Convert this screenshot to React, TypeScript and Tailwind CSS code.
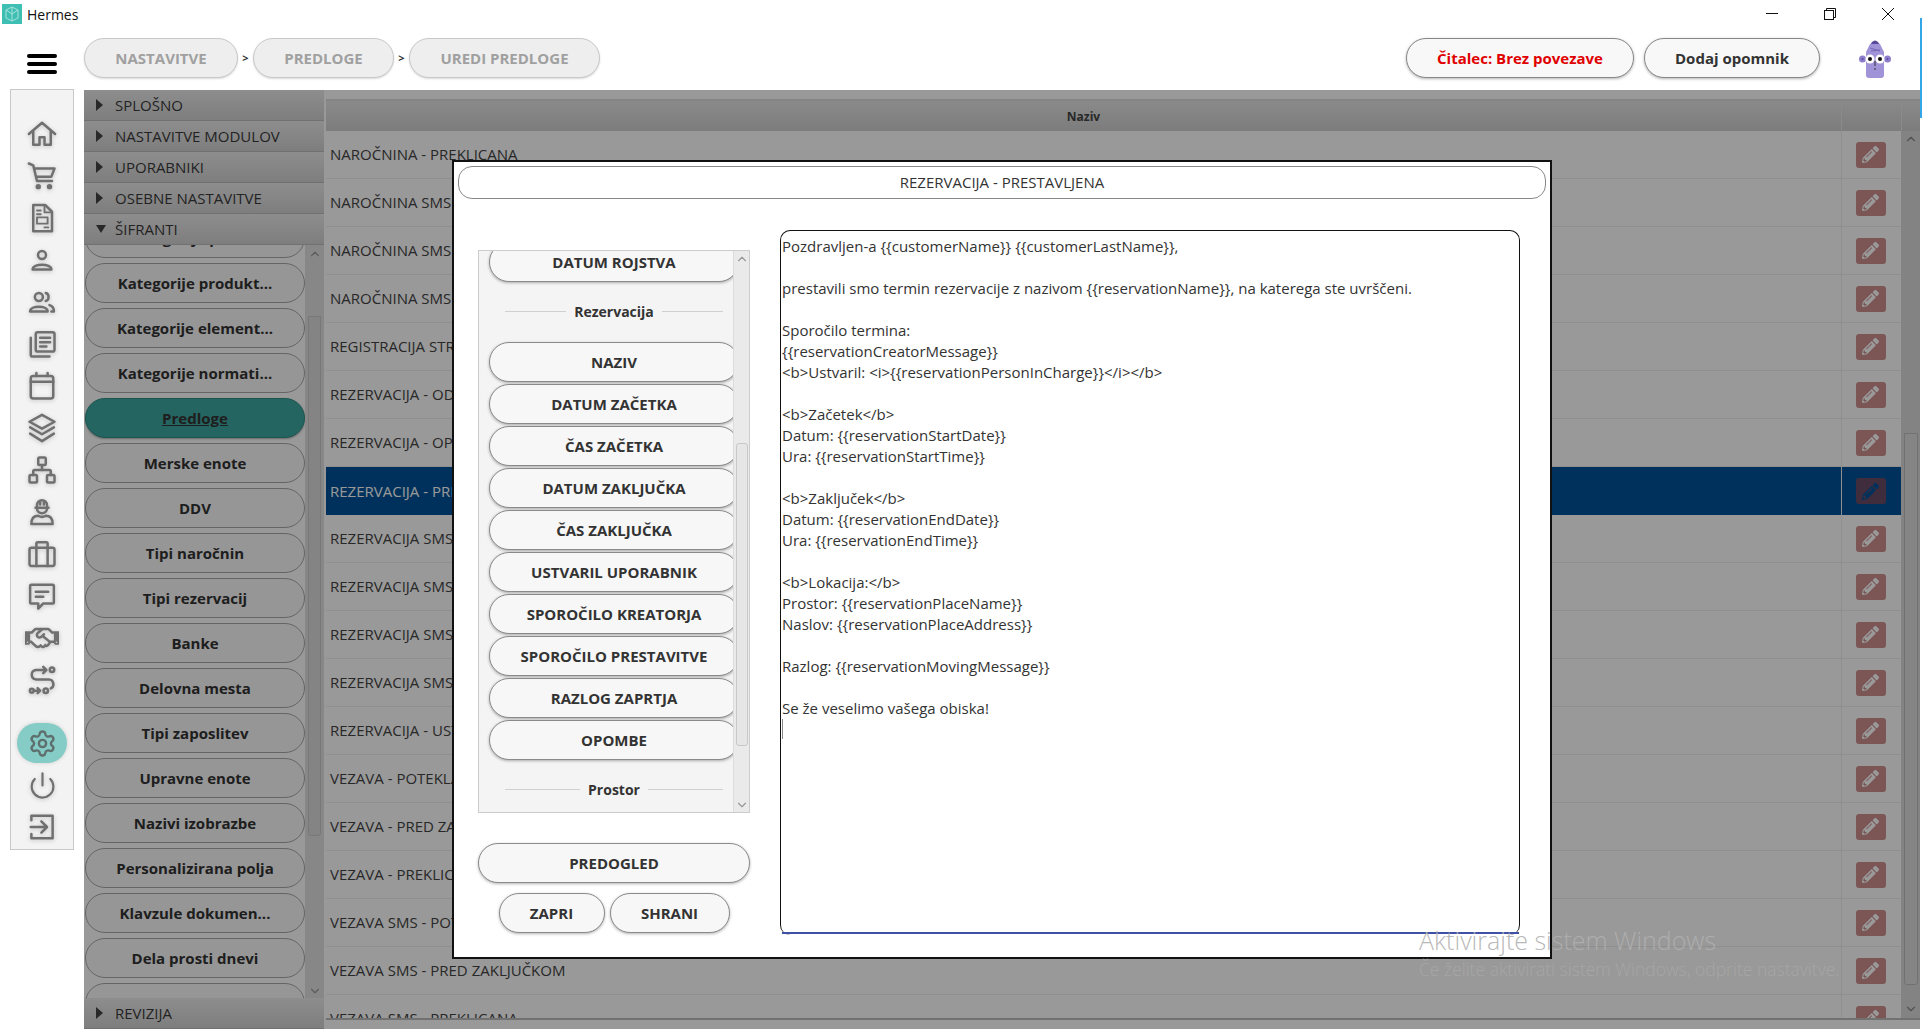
import { ReactNode } from "react";
import { ChevronDown, ChevronUp, Network, Power, Settings } from "lucide-react";
import { FaPencilAlt, FaRegHandshake } from "react-icons/fa";

const settingsButtons = [
  "Kategorije prost...",
  "Kategorije produkt...",
  "Kategorije element...",
  "Kategorije normati...",
  "Predloge",
  "Merske enote",
  "DDV",
  "Tipi naročnin",
  "Tipi rezervacij",
  "Banke",
  "Delovna mesta",
  "Tipi zaposlitev",
  "Upravne enote",
  "Nazivi izobrazbe",
  "Personalizirana polja",
  "Klavzule dokumen...",
  "Dela prosti dnevi",
  "",
];

const tableRows = [
  "NAROČNINA - PREKLICANA",
  "NAROČNINA SMS - POTEKLA",
  "NAROČNINA SMS - PRED ZAKLJUČKOM",
  "NAROČNINA SMS - PREKLICANA",
  "REGISTRACIJA STRANKE",
  "REZERVACIJA - ODPOVEDANA",
  "REZERVACIJA - OPOMNIK",
  "REZERVACIJA - PRESTAVLJENA",
  "REZERVACIJA SMS - ODPOVEDANA",
  "REZERVACIJA SMS - OPOMNIK",
  "REZERVACIJA SMS - PRESTAVLJENA",
  "REZERVACIJA SMS - USTVARJENA",
  "REZERVACIJA - USTVARJENA",
  "VEZAVA - POTEKLA",
  "VEZAVA - PRED ZAKLJUČKOM",
  "VEZAVA - PREKLICANA",
  "VEZAVA SMS - POTEKLA",
  "VEZAVA SMS - PRED ZAKLJUČKOM",
  "VEZAVA SMS - PREKLICANA",
];

const reservationFields = [
  "NAZIV",
  "DATUM ZAČETKA",
  "ČAS ZAČETKA",
  "DATUM ZAKLJUČKA",
  "ČAS ZAKLJUČKA",
  "USTVARIL UPORABNIK",
  "SPOROČILO KREATORJA",
  "SPOROČILO PRESTAVITVE",
  "RAZLOG ZAPRTJA",
  "OPOMBE",
];

const templateBody = `Pozdravljen-a {{customerName}} {{customerLastName}},

prestavili smo termin rezervacije z nazivom {{reservationName}}, na katerega ste uvrščeni.

Sporočilo termina:
{{reservationCreatorMessage}}
<b>Ustvaril: <i>{{reservationPersonInCharge}}</i></b>

<b>Začetek</b>
Datum: {{reservationStartDate}}
Ura: {{reservationStartTime}}

<b>Zaključek</b>
Datum: {{reservationEndDate}}
Ura: {{reservationEndTime}}

<b>Lokacija:</b>
Prostor: {{reservationPlaceName}}
Naslov: {{reservationPlaceAddress}}

Razlog: {{reservationMovingMessage}}

Se že veselimo vašega obiska!`;

function NavSvg({ children }: { children: ReactNode }) {
  return (
    <svg
      viewBox="0 0 24 24"
      className="h-[30px] w-[30px]"
      fill="none"
      stroke="#707070"
      strokeWidth="2"
      strokeLinecap="round"
      strokeLinejoin="round"
    >
      {children}
    </svg>
  );
}

const navIcons: ReactNode[] = [
  <NavSvg key="home">
    <path d="M1.5 12 12 3l10.5 9M5 9.5V20.5h5v-6h4v6h5V9.5" />
  </NavSvg>,
  <NavSvg key="cart">
    <path d="M1.500 2 5 3.500l3 12.500h12M6 6h16l-2.500 6.500H7.500" />
    <circle cx="9" cy="20.500" r="1.200" fill="#707070" />
    <circle cx="18" cy="20.500" r="1.200" fill="#707070" />
  </NavSvg>,
  <NavSvg key="doc">
    <path d="M5 1.5h9.5L20 7v15.5H5z" />
    <path d="M14 2v5.5h5.5M8 6h3M8 9h3M14 19.500h3" strokeWidth="1.5" />
    <rect x="8" y="11.5" width="8.5" height="5" strokeWidth="1.5" />
  </NavSvg>,
  <NavSvg key="user">
    <circle cx="12" cy="8" r="3.2" />
    <path d="M4.5 19.5c0-5 15-5 15 0z" />
  </NavSvg>,
  <NavSvg key="users">
    <circle cx="9.5" cy="8" r="3.2" />
    <path d="M2.5 19.5c0-5 14-5 14 0z" />
    <path d="M15 4.8c3 .6 3 5.8 0 6.4M18 14.5c2.5.7 3.5 2.6 3.5 5h-2" />
  </NavSvg>,
  <NavSvg key="copies">
    <rect x="7" y="2.5" width="15" height="15.5" rx="1.5" />
    <path d="M3 7v13.5c0 .8.6 1.5 1.5 1.5H18M10.5 7h8M10.5 10.5h8M10.5 14h5" />
  </NavSvg>,
  <NavSvg key="calendar">
    <rect x="3" y="4" width="18" height="18" rx="2" />
    <path d="M3 8.5h18M7.5 1.5V4M16.5 1.5V4" />
  </NavSvg>,
  <NavSvg key="layers">
    <path d="m12 1.500 10 5.500-10 5.500-10-5.500z" />
    <path d="m2.500 11.500 9.500 5.500 9.500-5.500M2.500 16.500l9.500 6 9.500-6" />
  </NavSvg>,
  <Network key="network" size={30} color="#707070" strokeWidth={2} />,
  <NavSvg key="worker">
    <path d="M8 8V6.500a4 4 0 0 1 8 0V8M6.800 8.500h10.400M8 9a4 4 0 0 0 8 0M10.500 3v3M13.500 3v3" />
    <path d="M3.500 21.500c0-6 4-6.500 5.500-6.500 2 1.200 4 1.200 6 0 1.500 0 5.500.5 5.500 6.500z" />
  </NavSvg>,
  <NavSvg key="briefcase">
    <rect x="2" y="7" width="20" height="14.500" rx="1.500" />
    <path d="M7.500 7V3.500c0-.6.4-1 1-1h7c.6 0 1 .4 1 1V7M7.500 7v14.500M16.500 7v14.500" />
  </NavSvg>,
  <NavSvg key="message">
    <path d="M3.500 3h17c.6 0 1 .4 1 1v13c0 .6-.4 1-1 1H13l-4 4v-4H3.500c-.6 0-1-.4-1-1V4c0-.6.4-1 1-1z" />
    <path d="M7 8.500h10M7 12.500h6" />
  </NavSvg>,
  <FaRegHandshake key="handshake" size={34} color="#707070" />,
  <NavSvg key="route">
    <circle cx="20" cy="3.800" r="1.800" />
    <circle cx="15" cy="20.500" r="1.800" />
    <circle cx="3.800" cy="20.500" r="1.500" />
    <path d="M15.500 4H7a3.800 3.800 0 0 0 0 7.500h10.500a3.800 3.800 0 0 1 1.500 7.200M13 1.500 15.500 4 13 6.500M6 20.500h4M8.500 18.500l2 2-2 2" />
  </NavSvg>,
];

function NavRail() {
  return (
    <div className="ml-[10px] flex h-[761px] w-[64px] flex-col items-center border border-[#c8c8c8] bg-[#f3f3f3] pt-[24px]">
      <div className="flex flex-col items-center gap-[2px]">
        {navIcons.map((icon, i) => (
          <div key={i} className="flex h-10 w-10 items-center justify-center drop-shadow-[0_1px_2px_rgba(0,0,0,0.2)]">
            {icon}
          </div>
        ))}
      </div>
      <div className="mt-[23px] flex h-10 w-[50px] items-center justify-center rounded-[20px] bg-[#85ccc6] shadow-[0_0_4px_rgba(0,0,0,0.15)]">
        <Settings size={29} color="#5f6f6e" strokeWidth={2} />
      </div>
      <div className="mt-[2px] flex h-10 w-10 items-center justify-center drop-shadow-[0_1px_2px_rgba(0,0,0,0.2)]">
        <Power size={29} color="#707070" strokeWidth={1.8} />
      </div>
      <div className="mt-[2px] flex h-10 w-10 items-center justify-center drop-shadow-[0_1px_2px_rgba(0,0,0,0.2)]">
        <NavSvg>
          <path d="M3.500 6.500V3h17v18h-17v-3.500M3 12h12M11.500 7.500 16 12l-4.500 4.500" />
        </NavSvg>
      </div>
    </div>
  );
}

function AccordionHeader({ label, open }: { label: string; open?: boolean }) {
  return (
    <div className="flex h-[31px] shrink-0 items-center border-b border-[#bcbcbc] bg-gradient-to-b from-[#ececec] to-[#d2d2d2] pl-[12px] text-[15px] text-[#3a3a3a]">
      <span className="flex w-[19px] items-center">
        {open ? (
          <span className="h-0 w-0 border-x-[5px] border-t-[8px] border-x-transparent border-t-[#444]" />
        ) : (
          <span className="h-0 w-0 border-y-[6px] border-l-[7px] border-y-transparent border-l-[#444]" />
        )}
      </span>
      {label}
    </div>
  );
}

function SettingsColumn() {
  return (
    <div className="flex h-[939px] w-[240px] flex-col bg-[#e8e8e8]">
      <AccordionHeader label="SPLOŠNO" />
      <AccordionHeader label="NASTAVITVE MODULOV" />
      <AccordionHeader label="UPORABNIKI" />
      <AccordionHeader label="OSEBNE NASTAVITVE" />
      <AccordionHeader label="ŠIFRANTI" open />
      <div className="flex min-h-0 flex-1">
        <div className="min-w-0 flex-1 overflow-hidden bg-white pl-[1px]">
          <div className="-mt-[27px] flex w-[220px] flex-col gap-[5px]">
            {settingsButtons.map((label, i) => (
              <div
                key={i}
                className={
                  label === "Predloge"
                    ? "flex h-10 items-center justify-center rounded-[20px] border border-[#2f8f88] bg-[#3fa8a2] text-[15px] font-bold text-[#333] underline shadow-[0_1px_2px_rgba(0,0,0,0.3)]"
                    : "flex h-10 items-center justify-center rounded-[20px] border border-[#a8a8a8] bg-[#fafafa] text-[15px] font-bold text-[#333]"
                }
              >
                {label}
              </div>
            ))}
          </div>
        </div>
        <div className="flex w-[19px] flex-col items-center bg-[#e2e2e2]">
          <ChevronUp size={14} color="#999" className="mt-[2px]" />
          <div className="mt-[55px] h-[521px] w-[13px] rounded-b-[3px] border border-[#c8c8c8] bg-[#dcdcdc]" />
          <ChevronDown size={14} color="#999" className="mt-[148px]" />
        </div>
      </div>
      <AccordionHeader label="REVIZIJA" />
    </div>
  );
}

function TemplateTable() {
  return (
    <div className="ml-[2px] flex h-[939px] w-[1594px] flex-col bg-[#f0f0f0]">
      <div className="h-[11px] shrink-0 border-b-2 border-[#dcdcdc] bg-white" />
      <div className="flex h-[30px] shrink-0 border-b border-[#d0d0d0] bg-gradient-to-b from-[#e6e6e6] to-[#d0d0d0] pt-[3px] text-[12px] font-bold text-[#444]">
        <div className="flex flex-1 items-center justify-center">Naziv</div>
        <div className="w-[60px] border-l border-[#e8e8e8]" />
        <div className="w-[19px] border-l border-[#e8e8e8]" />
      </div>
      <div className="flex min-h-0 flex-1">
        <div className="min-w-0 flex-1 overflow-hidden bg-white">
          {tableRows.map((row) => {
            const selected = row === "REZERVACIJA - PRESTAVLJENA";
            return (
              <div
                key={row}
                className={
                  selected
                    ? "flex h-[48px] bg-[#005399] text-[15px] text-white"
                    : "flex h-[48px] border-b border-[#eeeeee] text-[15px] text-[#444]"
                }
              >
                <div className="flex flex-1 items-center pl-[4px]">{row}</div>
                <div className="flex w-[60px] items-center justify-center border-l border-[#eeeeee] pr-[2px]">
                  <div
                    className={
                      selected
                        ? "flex h-[26px] w-[30px] items-center justify-center rounded-[3px] bg-[#694b67]"
                        : "flex h-[26px] w-[30px] items-center justify-center rounded-[3px] bg-[#cf8f8e]"
                    }
                  >
                    <FaPencilAlt size={17} color={selected ? "#005399" : "#ffffff"} />
                  </div>
                </div>
              </div>
            );
          })}
        </div>
        <div className="flex w-[19px] flex-col items-center bg-[#dadada]">
          <ChevronUp size={14} color="#888" className="mt-[1px]" />
          <div className="mt-[287px] h-[552px] w-[14px] rounded-b-[3px] border border-[#bdbdbd] bg-[#dedede]" />
          <ChevronDown size={14} color="#888" className="mt-[17px]" />
        </div>
      </div>
      <div className="h-[11px] shrink-0 border-t-2 border-[#bcbcbc] bg-[#ffffff]" />
    </div>
  );
}

function FieldButton({ label }: { label: string }) {
  return (
    <div className="flex h-10 w-[250px] shrink-0 items-center justify-center rounded-[20px] border border-[#8a8a8a] bg-[#f7f7f7] text-[15px] font-bold text-[#333] shadow-[0_1px_3px_rgba(0,0,0,0.3)]">
      {label}
    </div>
  );
}

function GroupDivider({ label }: { label: string }) {
  return (
    <div className="ml-[16px] flex h-[56px] w-[218px] shrink-0 items-center gap-[8px] pb-[2px] text-[14px] font-bold text-[#333]">
      <div className="h-px flex-1 bg-[#d0d0d0]" />
      {label}
      <div className="h-px flex-1 bg-[#d0d0d0]" />
    </div>
  );
}

function TemplateModal() {
  return (
    <div className="absolute left-[452px] top-[160px] flex h-[799px] w-[1100px] flex-col border-2 border-[#111] bg-white">
      <div className="mx-[4px] mt-[4px] flex h-[33px] shrink-0 items-center justify-center rounded-[14px] border border-[#888] text-[15px] text-[#333]">
        REZERVACIJA - PRESTAVLJENA
      </div>
      <div className="flex pt-[31px]">
        <div className="ml-[24px] flex w-[272px] flex-col pt-[20px]">
          <div className="flex h-[563px] border border-[#cccccc] bg-[#f4f4f4]">
            <div className="w-[254px] overflow-hidden">
              <div className="-mt-[9px] flex w-[268px] flex-col items-start gap-[2px] pl-[10px]">
                <FieldButton label="DATUM ROJSTVA" />
                <GroupDivider label="Rezervacija" />
                {reservationFields.map((f) => (
                  <FieldButton key={f} label={f} />
                ))}
                <GroupDivider label="Prostor" />
              </div>
            </div>
            <div className="flex w-[16px] flex-col items-center border-l border-[#dcdcdc] bg-[#eaeaea]">
              <ChevronUp size={14} color="#999" className="mt-[1px]" />
              <div className="mt-[177px] h-[304px] w-[12px] rounded-[3px] border border-[#c8c8c8] bg-[#e6e6e6]" />
              <ChevronDown size={14} color="#999" className="mt-[52px]" />
            </div>
          </div>
          <div className="mt-[30px] flex h-10 items-center justify-center rounded-[20px] border border-[#8a8a8a] bg-[#f7f7f7] text-[15px] font-bold text-[#333] shadow-[0_1px_3px_rgba(0,0,0,0.3)]">
            PREDOGLED
          </div>
          <div className="mt-[10px] flex justify-center gap-[5px]">
            <div className="flex h-10 w-[106px] items-center justify-center rounded-[20px] border border-[#8a8a8a] bg-[#f7f7f7] text-[15px] font-bold text-[#333] shadow-[0_1px_3px_rgba(0,0,0,0.3)]">
              ZAPRI
            </div>
            <div className="flex h-10 w-[120px] items-center justify-center rounded-[20px] border border-[#8a8a8a] bg-[#f7f7f7] text-[15px] font-bold text-[#333] shadow-[0_1px_3px_rgba(0,0,0,0.3)]">
              SHRANI
            </div>
          </div>
        </div>
        <div className="ml-[30px] h-[705px] w-[740px] rounded-[10px] border-[1.5px] border-b-0 border-[#111] pl-[1px] pt-[5px]">
          <div className="h-[698px] border-b-2 border-[#3f51a5]">
            <div className="whitespace-pre-wrap text-[15px] leading-[21px] text-[#333]">{templateBody}</div>
            <div className="h-[20px] w-px bg-[#888]" />
          </div>
        </div>
      </div>
    </div>
  );
}

function Avatar() {
  return (
    <svg viewBox="0 0 32 39" className="h-[39px] w-[32px]">
      <path d="M7 13 11 5Q16 0 21 5L25 13V36q0 3-3 3H10q-3 0-3-3z" fill="#a093d8" />
      <path d="M13 3Q16 0 19 3l1 2H12z" fill="#5a4a9c" />
      <path d="M11 9l10 3M12 12l9-1" stroke="#7767b5" strokeWidth="1" />
      <circle cx="3.500" cy="20" r="3.500" fill="#8d7dcc" />
      <circle cx="28.500" cy="20" r="3.500" fill="#8d7dcc" />
      <circle cx="3.500" cy="20" r="1" fill="#5a4a9c" />
      <circle cx="28.500" cy="20" r="1" fill="#5a4a9c" />
      <circle cx="11" cy="20" r="4.500" fill="#fff" />
      <circle cx="21" cy="20" r="4.500" fill="#fff" />
      <circle cx="11" cy="20" r="2" fill="#111" />
      <circle cx="21" cy="20" r="2" fill="#111" />
      <path d="M16 22v5M15 30h2" stroke="#333" strokeWidth="1" />
    </svg>
  );
}

function Crumb({ label, width }: { label: string; width: string }) {
  return (
    <div className={`flex h-10 items-center justify-center rounded-[20px] border border-[#c9c9c9] bg-[#eeeeee] text-[15px] font-bold text-[#a0a0a0] shadow-[0_1px_2px_rgba(0,0,0,0.15)] ${width}`}>
      {label}
    </div>
  );
}

export default function App() {
  return (
    <div className="relative h-[1029px] w-[1922px] overflow-hidden bg-white font-['Open_Sans',sans-serif]">
      <div className="flex h-[30px] items-start">
        <div className="ml-[2px] mt-[4px] flex h-5 w-5 items-center justify-center bg-[#3fbfb3]">
          <svg viewBox="0 0 20 20" className="h-5 w-5" fill="none" stroke="#a5e2dc" strokeWidth="1">
            <path d="M10 3 4 6v8l6 3 6-3V6zM10 3v14M4 6l6 4 6-4" />
          </svg>
        </div>
        <div className="ml-[5px] mt-[5px] text-[14px] leading-[20px] text-[#111]">Hermes</div>
        <div className="ml-auto mr-[28px] mt-[8px] flex items-start gap-[46px]">
          <div className="mt-[5px] h-px w-[12px] bg-[#111]" />
          <svg viewBox="0 0 12 12" className="h-3 w-3" fill="none" stroke="#111" strokeWidth="1">
            <rect x="0.5" y="2.500" width="9" height="9" />
            <path d="M2.500 2.500V0.500h9v9H9.500" />
          </svg>
          <svg viewBox="0 0 12 12" className="h-3 w-3" fill="none" stroke="#111" strokeWidth="1">
            <path d="M0 0 12 12M12 0 0 12" />
          </svg>
        </div>
      </div>

      <div className="flex h-[59px] items-start pt-[8px]">
        <div className="ml-[27px] mt-[16px] flex w-[30px] flex-col gap-[4px]">
          <div className="h-[4px] rounded-full bg-black" />
          <div className="h-[4px] rounded-full bg-black" />
          <div className="h-[4px] rounded-full bg-black" />
        </div>
        <div className="ml-[27px] flex items-center">
          <Crumb label="NASTAVITVE" width="w-[154px]" />
          <span className="w-[15px] text-center text-[11px] font-bold text-[#333]">&gt;</span>
          <Crumb label="PREDLOGE" width="w-[141px]" />
          <span className="w-[15px] text-center text-[11px] font-bold text-[#333]">&gt;</span>
          <Crumb label="UREDI PREDLOGE" width="w-[191px]" />
        </div>
        <div className="ml-auto mr-[31px] flex items-center">
          <div className="flex h-10 w-[228px] items-center justify-center rounded-[20px] border border-[#888] bg-[#f8f8f8] text-[15px] font-bold text-[#e00000] shadow-[0_1px_3px_rgba(0,0,0,0.3)]">
            Čitalec: Brez povezave
          </div>
          <div className="ml-[10px] flex h-10 w-[176px] items-center justify-center rounded-[20px] border border-[#888] bg-[#f8f8f8] text-[15px] font-bold text-[#333] shadow-[0_1px_3px_rgba(0,0,0,0.3)]">
            Dodaj opomnik
          </div>
          <div className="ml-[39px]">
            <Avatar />
          </div>
        </div>
      </div>

      <div className="flex">
        <div className="w-[84px] shrink-0">
          <NavRail />
        </div>
        <div className="flex pt-px">
          <SettingsColumn />
          <TemplateTable />
        </div>
      </div>

      <div className="absolute bottom-0 left-[84px] right-[2px] top-[90px] bg-black/40" />
      <TemplateModal />

      <div className="absolute right-0 top-[18px] h-[100px] w-[2px] bg-[#33a6e8]" />

      <div className="absolute left-[1419px] top-[923px] text-[25px] font-light leading-[34px] text-[#b0b0b0]/90">
        Aktivirajte sistem Windows
      </div>
      <div className="absolute left-[1419px] top-[959px] text-[17.5px] font-light leading-[20px] text-[#a6a6a6]">
        Če želite aktivirati sistem Windows, odprite nastavitve.
      </div>
    </div>
  );
}
